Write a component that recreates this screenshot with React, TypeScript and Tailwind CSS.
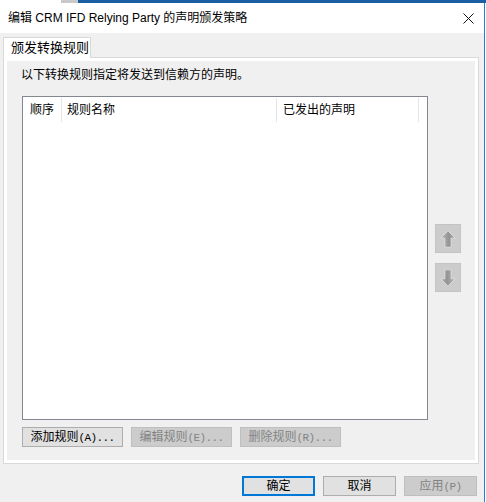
import React from 'react';

const FONT = "font-['Liberation_Sans','Noto_Sans_CJK_SC',sans-serif]";

function Label({ text, hot }: { text: string; hot?: string }) {
    return (
        <span className="flex items-baseline">
            <span>{text}</span>
            {hot && <span className="font-['Liberation_Mono','Noto_Sans_CJK_SC',monospace] text-[11px] tracking-[-0.6px]">{hot}</span>}
        </span>
    );
}

function Btn({ label, hot, disabled, primary, w }: { label: string; hot?: string; disabled?: boolean; primary?: boolean; w: string }) {
    const base = `${w} h-[20px] flex items-center justify-center text-[12px] leading-none`;
    let look = 'bg-[#e1e1e1] border border-[#adadad] text-black';
    if (disabled) look = 'bg-[#cccccc] border border-[#bfbfbf] text-[#838383]';
    if (primary) look = 'bg-[#e1e1e1] border-2 border-[#0078d7] text-black';
    return (
        <div className={`${base} ${look}`}>
            <Label text={label} hot={hot} />
        </div>
    );
}

function ArrowBtn({ down }: { down?: boolean }) {
    const id = down ? 'gd' : 'gu';
    return (
        <div className="w-[26px] h-[29px] bg-[#cccccc] border border-[#c4c4c4] flex items-center justify-center">
            <svg width="16" height="18" viewBox="0 0 16 18" className={down ? 'rotate-180' : ''}>
                <defs>
                    <linearGradient id={id} x1="0" x2="1" y1="0" y2="0">
                        <stop offset="0" stopColor="#b8b8b8" />
                        <stop offset="0.55" stopColor="#959595" />
                        <stop offset="1" stopColor="#a8a8a8" />
                    </linearGradient>
                </defs>
                <path d="M8 0.8 L15.2 8.2 L11.2 8.2 L11.2 17.2 L4.8 17.2 L4.8 8.2 L0.8 8.2 Z" fill={`url(#${id})`} stroke="#dcdcdc" strokeWidth="1" strokeLinejoin="round" />
            </svg>
        </div>
    );
}

export default function App() {
    return (
        <div className={`w-[486px] h-[502px] flex flex-col bg-[#f0f0f0] text-black ${FONT}`}>
            {/* strip of whatever sits behind the dialog */}
            <div className="h-[3px] flex">
                <div className="w-[61px] bg-white" />
                <div className="w-[17px] bg-[#c9c9c9]" />
                <div className="flex-1 bg-[#1c5ea3]" />
            </div>

            <div className="flex flex-1">
                <div className="w-[484px] flex flex-col">
                    {/* title bar */}
                    <div className="h-[30px] bg-white flex items-center justify-between pl-[8px] pr-[10px]">
                        <span className="text-[12px]">编辑 CRM IFD Relying Party 的声明颁发策略</span>
                        <svg width="11" height="11" viewBox="0 0 11 11">
                            <path d="M0.5 0.5 L10.5 10.5 M10.5 0.5 L0.5 10.5" stroke="#111" strokeWidth="1" />
                        </svg>
                    </div>

                    {/* body */}
                    <div className="flex-1 flex flex-col px-[3px] pt-[4px]">
                        <div className="flex">
                            <div className="relative z-10 -mb-px w-[88px] h-[21px] bg-white border border-b-0 border-[#d9d9d9] pl-[7px] flex items-center text-[13px]">
                                颁发转换规则
                            </div>
                        </div>
                        <div className="w-[476px] h-[407px] border border-[#d9d9d9] bg-white p-[3px]">
                            <div className="h-full bg-[#f0f0f0] flex flex-col pl-[15px] pt-[6px]">
                                <div className="text-[12px] leading-[16px] -ml-px">以下转换规则指定将发送到信赖方的声明。</div>
                                <div className="flex items-center mt-[13px]">
                                    <div className="w-[406px] h-[324px] border border-[#828790] bg-white">
                                        <div className="flex h-[26px] items-stretch text-[12px]">
                                            <div className="w-[38px] pl-[7px] flex items-center">顺序</div>
                                            <div className="w-px my-[1px] bg-[#e5e5e5]" />
                                            <div className="w-[214px] pl-[5px] flex items-center">规则名称</div>
                                            <div className="w-px my-[1px] bg-[#e5e5e5]" />
                                            <div className="w-[141px] pl-[6px] flex items-center">已发出的声明</div>
                                            <div className="w-px my-[1px] bg-[#e5e5e5]" />
                                        </div>
                                    </div>
                                    <div className="ml-[7px] flex flex-col gap-[10px]">
                                        <ArrowBtn />
                                        <ArrowBtn down />
                                    </div>
                                </div>
                                <div className="flex gap-[8px] mt-[7px]">
                                    <Btn w="w-[101px]" label="添加规则" hot="(A)..." />
                                    <Btn w="w-[101px]" label="编辑规则" hot="(E)..." disabled />
                                    <Btn w="w-[101px]" label="删除规则" hot="(R)..." disabled />
                                </div>
                            </div>
                        </div>

                        <div className="flex justify-end gap-[8px] mt-[12px] pr-[4px]">
                            <Btn w="w-[73px]" label="确定" primary />
                            <Btn w="w-[73px]" label="取消" />
                            <Btn w="w-[73px]" label="应用" hot="(P)" disabled />
                        </div>
                    </div>
                </div>
                <div className="w-px bg-[#1883d7]" />
                <div className="w-px bg-white" />
            </div>
        </div>
    );
}
